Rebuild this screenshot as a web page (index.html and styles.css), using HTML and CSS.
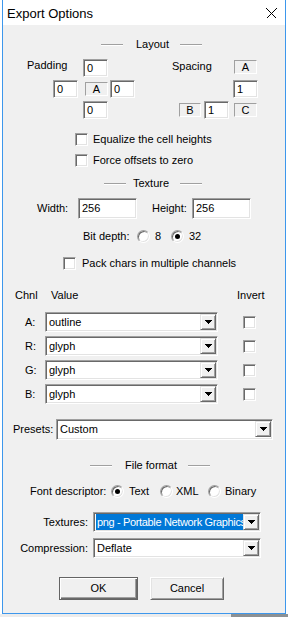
FILE: index.html
```html
<!DOCTYPE html>
<html lang="en">
<head>
  <meta charset="utf-8" />
  <title>Export Options</title>
  <link rel="stylesheet" href="styles.css">
</head>
<body>
<div class="win">
  <div class="titlebar">
    <span class="title">Export Options</span>
    <svg class="close" width="11" height="11" viewBox="0 0 11 11" shape-rendering="crispEdges"><path d="M0.5 0.5L10.5 10.5M10.5 0.5L0.5 10.5" stroke="#000" stroke-width="1" fill="none"/></svg>
  </div>

  <div class="dlg">
    <!-- Layout -->
    <div class="sep sep-layout"><i></i><span>Layout</span><i></i></div>
    <div class="cross">
      <span class="pad-label">Padding</span>
      <div class="edit pad-top">0</div>
      <span class="spc-label">Spacing</span>
      <div class="stat spc-a">A</div>
      <div class="edit pad-left">0</div>
      <div class="stat pad-a">A</div>
      <div class="edit pad-right">0</div>
      <div class="edit spc-v">1</div>
      <div class="edit pad-bottom">0</div>
      <div class="stat spc-b">B</div>
      <div class="edit spc-h">1</div>
      <div class="stat spc-c">C</div>
    </div>
    <div class="check-row eq"><span class="cb"></span>Equalize the cell heights</div>
    <div class="check-row force"><span class="cb"></span>Force offsets to zero</div>

    <!-- Texture -->
    <div class="sep sep-texture"><i></i><span>Texture</span><i></i></div>
    <div class="dims">
      <span class="w-label">Width:</span>
      <div class="edit wide">256</div>
      <span class="h-label">Height:</span>
      <div class="edit wide">256</div>
    </div>
    <div class="radio-row bits">
      <span class="bits-label">Bit depth:</span>
      <span class="rb"></span><span class="bits-8">8</span>
      <span class="rb on bits-rb2"></span><span class="bits-32">32</span>
    </div>
    <div class="check-row pack"><span class="cb"></span>Pack chars in multiple channels</div>

    <!-- Channels -->
    <div class="chan-head">
      <span class="h-chnl">Chnl</span>
      <span class="h-value">Value</span>
      <span>Invert</span>
    </div>
    <div class="chan-row first">
      <span class="ch">A:</span>
      <div class="combo chan-combo"><span class="combo-text">outline</span><span class="drop"><svg width="7" height="4"><path d="M0 0H7V1H6V2H5V3H4V4H3V3H2V2H1V1H0Z"/></svg></span></div>
      <span class="cb inv"></span>
    </div>
    <div class="chan-row">
      <span class="ch">R:</span>
      <div class="combo chan-combo"><span class="combo-text">glyph</span><span class="drop"><svg width="7" height="4"><path d="M0 0H7V1H6V2H5V3H4V4H3V3H2V2H1V1H0Z"/></svg></span></div>
      <span class="cb inv"></span>
    </div>
    <div class="chan-row">
      <span class="ch">G:</span>
      <div class="combo chan-combo"><span class="combo-text">glyph</span><span class="drop"><svg width="7" height="4"><path d="M0 0H7V1H6V2H5V3H4V4H3V3H2V2H1V1H0Z"/></svg></span></div>
      <span class="cb inv"></span>
    </div>
    <div class="chan-row">
      <span class="ch">B:</span>
      <div class="combo chan-combo"><span class="combo-text">glyph</span><span class="drop"><svg width="7" height="4"><path d="M0 0H7V1H6V2H5V3H4V4H3V3H2V2H1V1H0Z"/></svg></span></div>
      <span class="cb inv"></span>
    </div>
    <div class="presets">
      <span class="presets-label">Presets:</span>
      <div class="combo presets-combo"><span class="combo-text">Custom</span><span class="drop"><svg width="7" height="4"><path d="M0 0H7V1H6V2H5V3H4V4H3V3H2V2H1V1H0Z"/></svg></span></div>
    </div>

    <!-- File format -->
    <div class="sep sep-file"><i></i><span>File format</span><i></i></div>
    <div class="radio-row desc">
      <span class="desc-label">Font descriptor:</span>
      <span class="rb on"></span><span class="opt opt-text">Text</span>
      <span class="rb"></span><span class="opt opt-xml">XML</span>
      <span class="rb"></span><span class="opt opt-bin">Binary</span>
    </div>
    <div class="field-row tex">
      <span class="field-label">Textures:</span>
      <div class="combo file-combo"><span class="combo-text sel">png - Portable Network Graphics</span><span class="drop"><svg width="7" height="4"><path d="M0 0H7V1H6V2H5V3H4V4H3V3H2V2H1V1H0Z"/></svg></span></div>
    </div>
    <div class="field-row comp">
      <span class="field-label">Compression:</span>
      <div class="combo file-combo"><span class="combo-text">Deflate</span><span class="drop"><svg width="7" height="4"><path d="M0 0H7V1H6V2H5V3H4V4H3V3H2V2H1V1H0Z"/></svg></span></div>
    </div>

    <div class="buttons">
      <div class="btn default ok">OK</div>
      <div class="btn cancel">Cancel</div>
    </div>
  </div>
</div>
<div class="desk"></div>
</body>
</html>
```

FILE: styles.css
```css
body { margin: 0; background: #fff; font: 11px "Liberation Sans", Arial, sans-serif; color: #000; }

.win { margin-left: 2px; width: 282px; border: 1px solid #3d97ec; border-top: 0; }
.titlebar { height: 25px; background: #fff; display: flex; align-items: center; padding-left: 4px; font-size: 13px; }
.title { padding-top: 2px; }
.close { margin-left: auto; margin-right: 8px; margin-top: 1px; }

.dlg { background: #f0f0f0; height: 588px; box-sizing: border-box; padding-top: 13px; line-height: 13px; }

/* etched group headers */
.sep { display: flex; align-items: center; height: 13px; }
.sep i { width: 22px; height: 0; border-top: 1px solid #a0a0a0; border-bottom: 1px solid #fff; }
.sep span { margin: 0 11px 0 13px; }
.sep-layout { padding-left: 98px; }
.sep-texture { margin-top: 10px; padding-left: 101px; }
.sep-texture span { margin-left: 7px; }
.sep-file { margin-top: 19px; padding-left: 87px; }

/* sunken controls */
.edit, .cb, .combo { box-sizing: border-box; background: #fff; border: 1px solid; border-color: #a0a0a0 #fff #fff #a0a0a0; box-shadow: inset 1px 1px 0 #696969, inset -1px -1px 0 #e3e3e3; }
.edit { width: 25px; height: 18px; padding: 2px 0 0 3px; }
.edit.wide { width: 59px; height: 21px; padding-top: 3px; }
.stat { box-sizing: border-box; width: 23px; height: 14px; border: 1px solid; border-color: #a0a0a0 #fff #fff #a0a0a0; text-align: center; line-height: 12px; }
.cb { display: inline-block; width: 13px; height: 13px; flex: none; }
.rb { display: inline-block; box-sizing: border-box; width: 13px; height: 13px; border-radius: 50%; border: 1px solid; border-color: #a0a0a0 #fff #fff #a0a0a0; background: #fff; box-shadow: inset 1px 1px 0 #696969, inset -1px -1px 0 #e3e3e3; position: relative; flex: none; }
.rb.on::after { content: ""; position: absolute; left: 3px; top: 3px; width: 5px; height: 5px; border-radius: 50%; background: #000; }

/* layout cross */
.cross { display: grid; grid-template-columns: 24px 26px 30px 27px 62px 7px 25px 29px 25px; grid-template-rows: 18px 18px 18px; row-gap: 3px; margin-top: 8px; }
.pad-label { grid-row: 1; grid-column: 2 / 4; align-self: start; }
.pad-top { grid-row: 1; grid-column: 4; }
.spc-label { grid-row: 1; grid-column: 6 / 9; align-self: start; padding-top: 1px; }
.spc-a { grid-row: 1; grid-column: 9; justify-self: center; margin-top: 1px; }
.pad-left { grid-row: 2; grid-column: 3; }
.pad-a { grid-row: 2; grid-column: 4; justify-self: center; align-self: center; }
.pad-right { grid-row: 2; grid-column: 5; }
.spc-v { grid-row: 2; grid-column: 9; }
.pad-bottom { grid-row: 3; grid-column: 4; }
.spc-b { grid-row: 3; grid-column: 7; width: 22px; align-self: center; }
.spc-h { grid-row: 3; grid-column: 8; }
.spc-c { grid-row: 3; grid-column: 9; justify-self: center; align-self: center; }

.check-row { display: flex; align-items: center; height: 13px; }
.check-row .cb { margin-right: 5px; }
.eq { margin-top: 14px; padding-left: 72px; }
.force { margin-top: 8px; padding-left: 72px; }
.pack { margin-top: 14px; padding-left: 60px; }
.pack .cb { margin-right: 6px; }

.dims { display: flex; align-items: center; height: 21px; margin-top: 8px; padding-left: 34px; }
.w-label { width: 41px; }
.h-label { width: 40px; margin-left: 15px; }

.radio-row { display: flex; align-items: center; height: 13px; }
.bits { margin-top: 11px; padding-left: 80px; }
.bits-label { width: 54px; }
.bits-8 { margin-left: 5px; width: 16px; }
.bits-32 { margin-left: 5px; }

/* channels */
.chan-head { display: flex; height: 13px; margin-top: 19px; padding-left: 12px; }
.h-chnl { width: 36px; }
.h-value { width: 186px; }
.chan-row { display: flex; align-items: center; height: 20px; margin-top: 4px; }
.chan-row.first { margin-top: 10px; }
.ch { box-sizing: border-box; width: 42px; padding-left: 22px; }
.inv { margin-left: 25px; }

.combo { display: flex; height: 20px; padding: 1px; }
.combo-text { flex: 1; padding-left: 2px; line-height: 16px; overflow: hidden; white-space: nowrap; }
.combo-text.sel { margin-left: 1px; padding-left: 1px; background: #0078d7; color: #fff; letter-spacing: -0.35px; }
.drop { box-sizing: border-box; width: 16px; height: 16px; flex: none; display: flex; align-items: center; justify-content: center; background: #f0f0f0; border: 1px solid; border-color: #e3e3e3 #696969 #696969 #e3e3e3; box-shadow: inset 1px 1px 0 #fff, inset -1px -1px 0 #a0a0a0; }
.drop svg { display: block; }
.chan-combo { width: 173px; }

.presets { display: flex; align-items: center; height: 21px; margin-top: 15px; padding-left: 10px; }
.presets-label { width: 43px; }
.presets-combo { width: 217px; height: 21px; }
.presets-combo .combo-text { line-height: 17px; }

/* file format */
.desc { margin-top: 13px; padding-left: 27px; }
.desc-label { width: 81px; }
.opt-text { margin-left: 5px; width: 31px; }
.opt-xml { margin-left: 3px; width: 32px; }
.opt-bin { margin-left: 4px; }

.field-row { display: flex; align-items: center; height: 20px; }
.tex { margin-top: 14px; }
.comp { margin-top: 6px; }
.field-label { width: 85px; margin-right: 5px; text-align: right; }
.file-combo { width: 168px; }

.buttons { display: flex; margin-top: 19px; padding-left: 56px; }
.btn { box-sizing: border-box; height: 23px; line-height: 21px; text-align: center; background: #f0f0f0; border: 1px solid; border-color: #fff #696969 #696969 #fff; box-shadow: inset 1px 1px 0 #e3e3e3, inset -1px -1px 0 #a0a0a0; }
.btn.default { border: 1px solid #646464; box-shadow: inset 1px 1px 0 #fff, inset -1px -1px 0 #696969, inset -2px -2px 0 #a0a0a0; }
.ok { width: 79px; }
.cancel { width: 74px; margin-left: 12px; }

.desk { height: 3px; background: linear-gradient(to right, #ececec 231px, #8c9194 231px); }
```
